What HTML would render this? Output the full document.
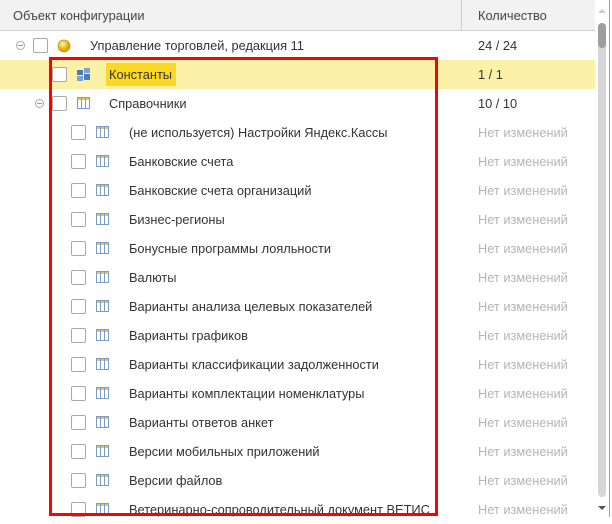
<!DOCTYPE html>
<html><head><meta charset="utf-8"><style>
body{margin:0;width:612px;height:517px;overflow:hidden;background:#fff;font-family:"Liberation Sans",sans-serif;font-size:12.8px;color:#333;position:relative}
.hdr{position:absolute;left:0;top:0;width:595px;height:30px;background:#f2f2f2;border-bottom:1px solid #d0d0d0}
.hdr span{position:absolute;top:8px;color:#444}
.vd{position:absolute;left:461px;top:0;width:1px;height:30px;background:#d0d0d0}
.row{position:absolute;left:0;width:595px;height:29px}
.row .t{position:absolute;top:7px;white-space:nowrap}
.row .c{position:absolute;left:478px;top:7px}
.row .n{position:absolute;left:478px;top:7px;color:#b5b5b5}
.cb{position:absolute;top:7px;width:13px;height:13px;border:1px solid #a8a8a8;border-radius:2px;background:#fff}
.tg{position:absolute;top:10px;width:7px;height:7px;border:1px solid #aaa;border-radius:50%}
.tg:after{content:"";position:absolute;left:1px;top:3px;width:5px;height:1px;background:#999}
.ic{position:absolute;top:8px}
</style></head><body>
<div class="hdr"><span style="left:13px">Объект конфигурации</span><span style="left:478px">Количество</span></div>
<div class="vd"></div>

<div class="row" style="top:31px"><div class="tg" style="left:16px"></div><div class="cb" style="left:33px"></div>
<svg class="ic" style="left:57px;top:8px" width="14" height="14"><defs><radialGradient id="g" cx="40%" cy="35%"><stop offset="0" stop-color="#fff6b0"/><stop offset="1" stop-color="#d9a800"/></radialGradient></defs><circle cx="7" cy="7" r="6" fill="url(#g)" stroke="#c49a00" stroke-width=".8"/></svg>
<span class="t" style="left:90px">Управление торговлей, редакция 11</span><span class="c">24 / 24</span></div>

<div class="row" style="top:60px;background:#fcf1a8"><div class="cb" style="left:52px"></div>
<svg class="ic" style="left:77px;top:8px" width="14" height="14"><rect x="0" y="2" width="6" height="5" fill="#4a7db8"/><rect x="7" y="0" width="6" height="5" fill="#7aa3d0"/><rect x="0" y="8" width="6" height="5" fill="#7aa3d0"/><rect x="7" y="6" width="6" height="6" fill="#4a7db8"/></svg>
<span style="position:absolute;left:106px;top:3px;width:70px;height:23px;background:#fbd923"></span>
<span class="t" style="left:109px">Константы</span><span class="c">1 / 1</span></div>

<div class="row" style="top:89px"><div class="tg" style="left:35px"></div><div class="cb" style="left:52px"></div>
<svg class="ic" style="left:77px" width="13" height="12"><rect x=".5" y=".5" width="12" height="11" fill="#fff" stroke="#7a9cc6"/><rect x="1" y="1" width="11" height="2" fill="#e7c64a"/><path d="M4.5 1v10M8.5 1v10" stroke="#7a9cc6"/></svg>
<span class="t" style="left:109px">Справочники</span><span class="c">10 / 10</span></div>

<div id="rows"></div>
<script>
var items=["(не используется) Настройки Яндекс.Кассы","Банковские счета","Банковские счета организаций","Бизнес-регионы","Бонусные программы лояльности","Валюты","Варианты анализа целевых показателей","Варианты графиков","Варианты классификации задолженности","Варианты комплектации номенклатуры","Варианты ответов анкет","Версии мобильных приложений","Версии файлов","Ветеринарно-сопроводительный документ ВЕТИС"];
var h="";items.forEach(function(s,i){h+='<div class="row" style="top:'+(118+29*i)+'px"><div class="cb" style="left:71px"></div><svg class="ic" style="left:96px" width="13" height="12"><rect x=".5" y=".5" width="12" height="11" fill="#fff" stroke="#7a9cc6"/><rect x="1" y="1" width="11" height="2" fill="#e7c64a"/><path d="M4.5 1v10M8.5 1v10" stroke="#7a9cc6"/></svg><span class="t" style="left:129px">'+s+'</span><span class="n">Нет изменений</span></div>'});
document.getElementById("rows").innerHTML=h;
</script>

<div style="position:absolute;left:49px;top:57px;width:383px;height:453px;border:3px solid #f00"></div>

<div style="position:absolute;left:598px;top:23px;width:8px;height:474px;background:#d6d6d6;border-radius:4px"></div>
<div style="position:absolute;left:598px;top:23px;width:8px;height:25px;background:#9e9e9e;border-radius:4px"></div>
<div style="position:absolute;left:598px;top:9px;width:0;height:0;border-left:4px solid transparent;border-right:4px solid transparent;border-bottom:4px solid #ccc"></div>
<div style="position:absolute;left:598px;top:506px;width:0;height:0;border-left:4px solid transparent;border-right:4px solid transparent;border-top:4px solid #555"></div>
<div style="position:absolute;left:609px;top:0;width:1px;height:517px;background:#a0a0a0"></div>
</body></html>
